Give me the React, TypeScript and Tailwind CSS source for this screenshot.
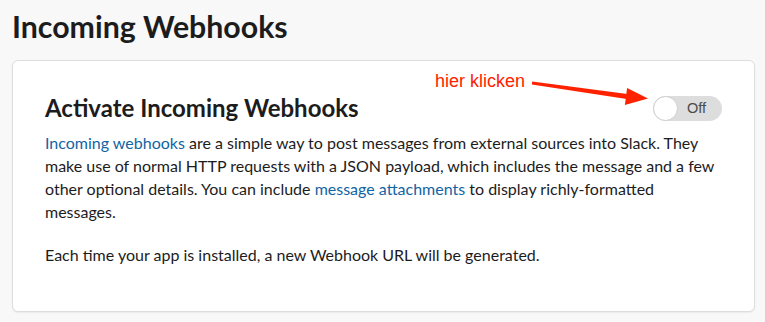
import React from "react";

export default function App() {
  return (
    <div
      className="w-[765px] h-[322px] bg-[#f8f8f8] overflow-hidden relative"
      style={{ fontFamily: "Lato, 'Noto Sans', sans-serif" }}
    >
      <h1 className="pl-[12px] pt-[6px] text-[30.3px] leading-[40px] font-bold text-[#1d1c1d]">
        Incoming Webhooks
      </h1>
      <div className="ml-[12px] mr-[10px] mt-[14px] h-[252px] bg-white border border-[#dddddd] rounded-[6px] shadow-[0_1px_2px_rgba(0,0,0,0.06)] pl-[32px] pr-[32px] pt-[31px]">
        <div className="flex items-center justify-between h-[32px]">
          <h2 className="text-[24px] leading-[32px] font-bold text-[#1d1c1d]">
            Activate Incoming Webhooks
          </h2>
          <div className="relative w-[69px] h-[25px] rounded-full bg-[#dddddd]">
            <div className="absolute left-0 top-0 w-[25px] h-[25px] rounded-full bg-white border border-[#cfcfcf]" />
            <span
              className="absolute left-[34px] top-[4px] text-[14.5px] leading-[17px] text-[#4a4a4a]"
              style={{ fontFamily: "'Liberation Sans', Arial, sans-serif" }}
            >
              Off
            </span>
          </div>
        </div>
        <div className="max-w-[673px]">
          <p className="mt-[7px] text-[16px] leading-[23px] text-[#1d1c1d]">
            <span className="text-[#1264a3]">Incoming webhooks</span> are a simple way to post messages from external sources into Slack. They make use of normal HTTP requests with a JSON payload, which includes the message and a few other optional details. You can include{" "}
            <span className="text-[#1264a3]">message attachments</span> to display richly-formatted messages.
          </p>
          <p className="mt-[20px] text-[16px] leading-[23px] text-[#1d1c1d]">
            Each time your app is installed, a new Webhook URL will be generated.
          </p>
        </div>
      </div>
      <span
        className="absolute left-[435px] top-[71px] text-[18px] leading-[20px] text-[#ff2200]"
        style={{ fontFamily: "'Liberation Sans', Arial, sans-serif" }}
      >
        hier klicken
      </span>
      <svg className="absolute left-0 top-0" width="765" height="322">
        <polygon points="532.2,81.5 627.3,94 626.7,99 531.8,84.5" fill="#ff2200" />
        <polygon points="648,98.5 627.1,88.1 624.9,104.9" fill="#ff2200" />
      </svg>
    </div>
  );
}
